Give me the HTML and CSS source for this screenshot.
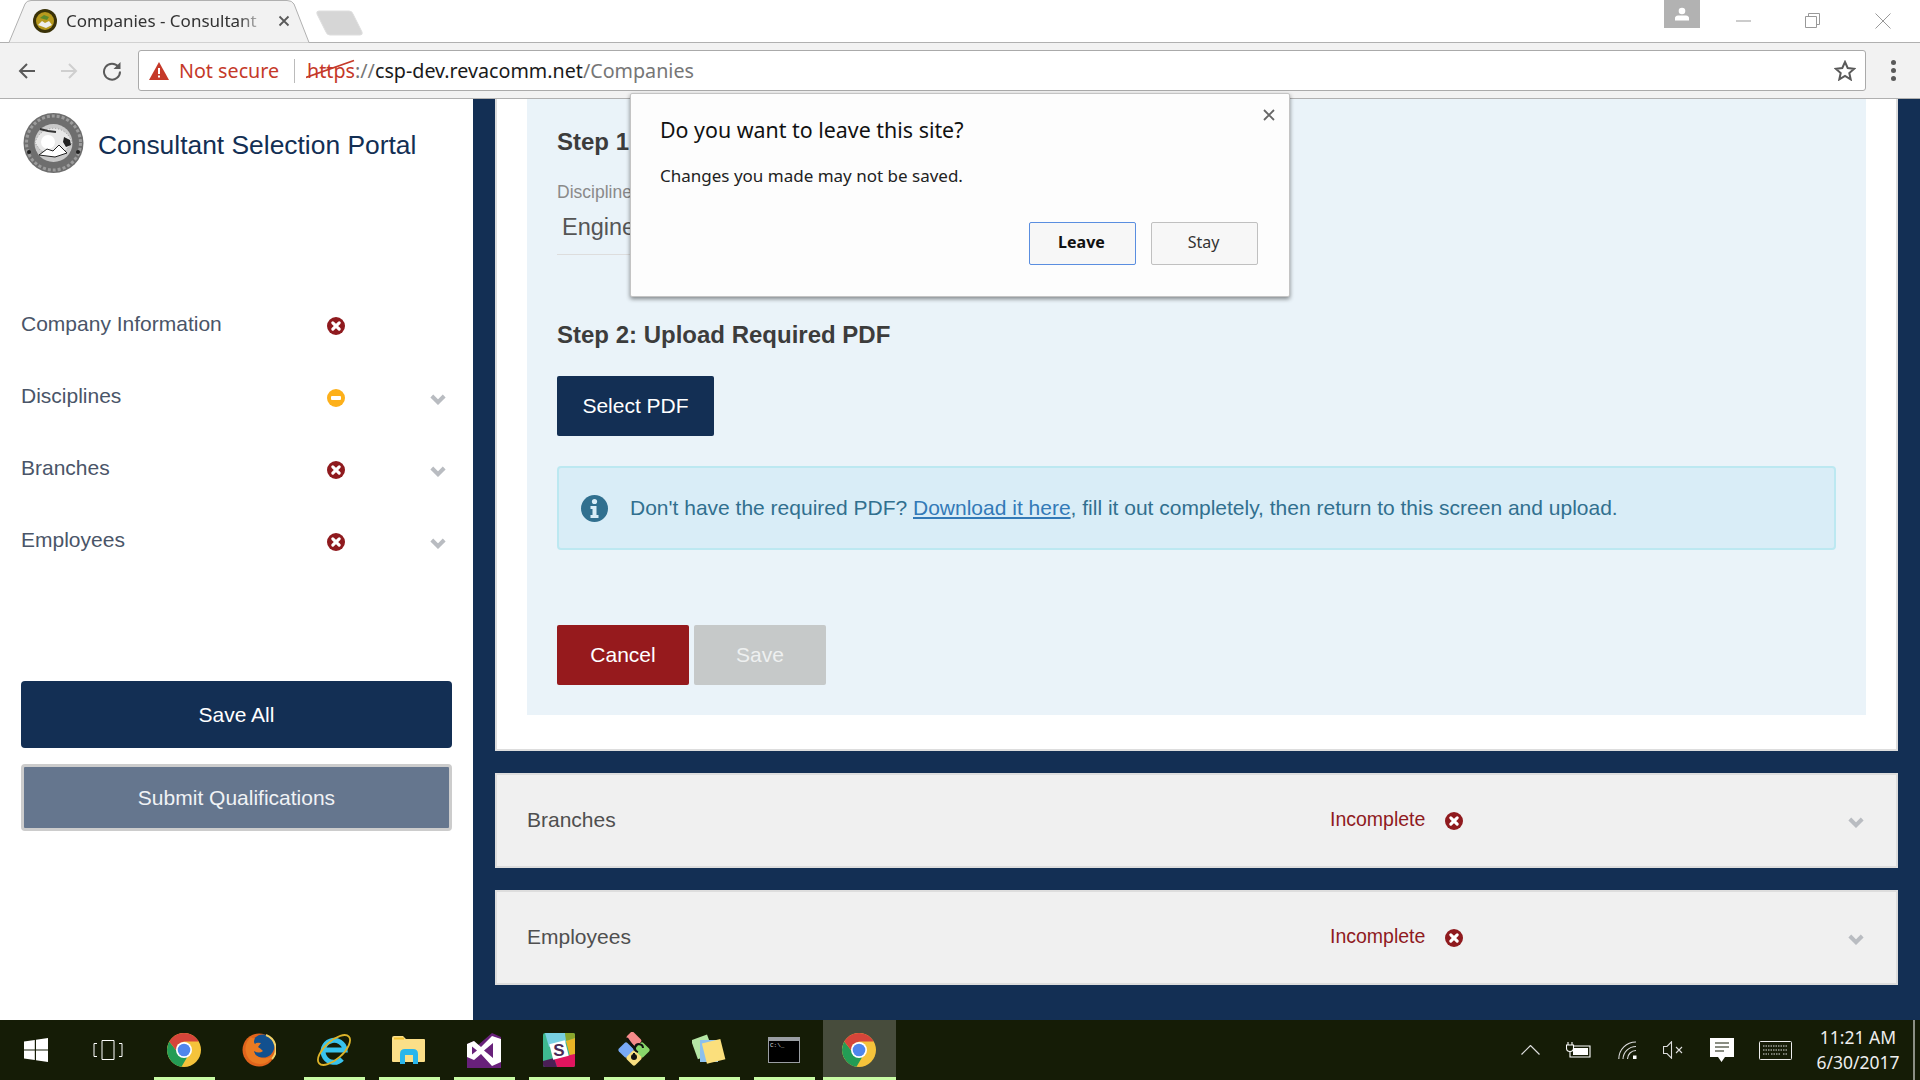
FILE: index.html
```html
<!doctype html>
<html>
  <head>
    <title>Companies - Consultant Selection Portal</title>
    <link rel="stylesheet" href="styles.css">
  </head>
  <body>
    <svg class="sprites">
      <symbol id="bad" viewBox="0 0 18 18">
        <circle cx="9" cy="9" r="9" fill="#8f1a1e"/>
        <path d="M5.8 5.8l6.4 6.4M12.2 5.8l-6.4 6.4" stroke="#fff" stroke-width="3.1" stroke-linecap="round"/>
      </symbol>
      <symbol id="partial" viewBox="0 0 18 18">
        <circle cx="9" cy="9" r="9" fill="#fdb01a"/>
        <rect x="4" y="7" width="10" height="4" rx="1" fill="#fff"/>
      </symbol>
      <symbol id="chevron" viewBox="0 0 16 11">
        <path d="M1.800 2l6.200 6.200L14.200 2" fill="none" stroke="#b9bcc1" stroke-width="4"/>
      </symbol>
      <symbol id="chrome" viewBox="0 0 34 34">
        <circle cx="17" cy="17" r="17" fill="#f5c33b"/>
        <path d="M2.3 8.5A17 17 0 0 0 14.5 33.8L22 21H12Z" fill="#249c55"/>
        <path d="M2.3 8.5A17 17 0 0 1 31.7 8.5H17L10 12 12 21Z" fill="#d5453a"/>
        <circle cx="17" cy="17" r="8" fill="#fff"/>
        <circle cx="17" cy="17" r="6.3" fill="#4f86ec"/>
      </symbol>
    </svg>

    <div class="tabstrip">
      <div class="tab">
        <svg class="tab-shape" width="311" height="43" viewBox="0 0 311 43">
          <path d="M0 42.5H1L17 4Q18.500 .5 23 .5H279Q284 .5 286 4L301 42.500H311V43H0Z" fill="#f2f2f2" stroke="#b0b0b0"/>
        </svg>
        <svg class="favicon" width="24" height="24" viewBox="0 0 24 24">
          <circle cx="12" cy="12" r="12" fill="#3a3208"/>
          <circle cx="12" cy="12" r="9" fill="#b89a1e"/>
          <path d="M5 16l4-4 3 2 4-2 3 4-6 3z" fill="#eee"/>
          <path d="M7 9l4-3 5 2-2 3z" fill="#5c8a2c"/>
        </svg>
        <span class="tab-title">Companies - Consultant</span>
        <svg class="tab-close" width="12" height="12" viewBox="0 0 12 12">
          <path d="M1.500 1.500l9 9M10.500 1.500l-9 9" stroke="#5a5a5a" stroke-width="1.800"/>
        </svg>
      </div>
      <svg class="newtab" width="50" height="26" viewBox="0 0 50 26">
        <path d="M3 1H33Q36 1 37 4L46 22Q47 25 44 25H14Q11 25 10 22L1 4Q0 1 3 1Z" fill="#d6d6d6" stroke="#dedede"/>
      </svg>
      <div class="window-controls">
        <div class="profile">
          <svg width="16" height="14" viewBox="0 0 16 14">
            <circle cx="8" cy="4" r="3.300" fill="#fff"/>
            <path d="M1 13.500V11Q1 9 4 8.500H12Q15 9 15 11V13.500Z" fill="#fff"/>
          </svg>
        </div>
        <svg class="win-min" width="15" height="2" viewBox="0 0 15 2"><path d="M0 1H15" stroke="#999"/></svg>
        <svg class="win-restore" width="15" height="15" viewBox="0 0 15 15">
          <path d="M3.500 3.500V.5H14.500V11.500H11.500M.5 3.500H11.500V14.500H.5Z" fill="none" stroke="#999"/>
        </svg>
        <svg class="win-close" width="16" height="16" viewBox="0 0 16 16">
          <path d="M.5 .5l15 15M15.500 .5l-15 15" stroke="#999"/>
        </svg>
      </div>
    </div>

    <div class="toolbar">
      <svg class="nav-icon" width="18" height="18" viewBox="0 0 18 18">
        <path d="M17 9H2M9 2L2 9l7 7" fill="none" stroke="#5a5a5a" stroke-width="2"/>
      </svg>
      <svg class="nav-icon nav-forward" width="18" height="18" viewBox="0 0 18 18">
        <path d="M1 9H16M9 2l7 7-7 7" fill="none" stroke="#cfcfcf" stroke-width="2"/>
      </svg>
      <svg class="nav-icon nav-reload" width="20" height="20" viewBox="0 0 20 20">
        <path d="M16.500 6A8 8 0 1 0 18 10.500" fill="none" stroke="#5a5a5a" stroke-width="2"/>
        <path d="M18.500 1V8H11.500Z" fill="#5a5a5a"/>
      </svg>
      <div class="omnibox">
        <svg class="warn" width="20" height="18" viewBox="0 0 20 18">
          <path d="M10 0L20 18H0Z" fill="#c53929"/>
          <path d="M9 6h2v6H9zM9 13.500h2v2H9z" fill="#fff"/>
        </svg>
        <span class="not-secure">Not secure</span>
        <span class="omni-sep"></span>
        <span class="url">
          <span class="url-scheme">https</span><span class="url-dim">://</span><span class="url-host">csp-dev.revacomm.net</span><span class="url-dim">/Companies</span>
          <svg class="url-strike" width="50" height="20" viewBox="0 0 50 20">
            <path d="M0 18.500L48 1.500" stroke="#c53929" stroke-width="1.800"/>
          </svg>
        </span>
        <svg class="star" width="22" height="21" viewBox="0 0 22 21">
          <path d="M11 2l2.700 6 6.500.7-4.900 4.300 1.400 6.400L11 16l-5.700 3.400 1.400-6.400L1.800 8.700 8.300 8z" fill="none" stroke="#5a5a5a" stroke-width="2"/>
        </svg>
      </div>
      <div class="kebab"><i></i><i></i><i></i></div>
    </div>

    <div class="page">
      <aside class="sidebar">
        <div class="brand">
          <svg class="seal" width="61" height="60" viewBox="0 0 61 60">
            <circle cx="30.500" cy="30" r="30" fill="#6e6e6e"/>
            <circle cx="30.500" cy="30" r="27" fill="none" stroke="#9c9c9c" stroke-width="3" stroke-dasharray="3 2"/>
            <circle cx="30.500" cy="30" r="19" fill="#c9c9c9"/>
            <path d="M12 30A19 19 0 0 1 49 30L42 38H18Z" fill="#e8e8e8" stroke="#999" stroke-dasharray="1 2"/>
            <circle cx="25" cy="29" r="7" fill="#fff"/>
            <path d="M16 42l8-6 6 2 6-6 8 8-12 4z" fill="#fff" stroke="#222"/>
            <path d="M41 24l6 3 1 5-5 2-3-5z" fill="#222"/>
            <path d="M17 16l8 2 8 1" stroke="#333" stroke-width="2" fill="none"/>
            <circle cx="6" cy="39" r="2" fill="#222"/>
            <circle cx="55" cy="39" r="2" fill="#222"/>
          </svg>
          <span class="brand-name">Consultant Selection Portal</span>
        </div>
        <nav class="section-nav">
          <div class="nav-row">
            <span class="nav-label">Company Information</span>
            <svg class="status" width="18" height="18"><use href="#bad"/></svg>
          </div>
          <div class="nav-row">
            <span class="nav-label">Disciplines</span>
            <svg class="status" width="18" height="18"><use href="#partial"/></svg>
            <svg class="chevron" width="16" height="11"><use href="#chevron"/></svg>
          </div>
          <div class="nav-row">
            <span class="nav-label">Branches</span>
            <svg class="status" width="18" height="18"><use href="#bad"/></svg>
            <svg class="chevron" width="16" height="11"><use href="#chevron"/></svg>
          </div>
          <div class="nav-row">
            <span class="nav-label">Employees</span>
            <svg class="status" width="18" height="18"><use href="#bad"/></svg>
            <svg class="chevron" width="16" height="11"><use href="#chevron"/></svg>
          </div>
        </nav>
        <button class="side-btn save-all">Save All</button>
        <button class="side-btn submit">Submit Qualifications</button>
      </aside>

      <main class="content">
        <section class="card">
          <div class="panel">
            <h3 class="step step-one">Step 1</h3>
            <div class="field">
              <div class="field-label">Discipline</div>
              <div class="field-value">Engineering</div>
            </div>
            <h3 class="step step-two">Step 2: Upload Required PDF</h3>
            <button class="btn btn-navy">Select PDF</button>
            <div class="alert">
              <svg class="alert-icon" width="27" height="27" viewBox="0 0 27 27">
                <circle cx="13.500" cy="13.500" r="13.500" fill="#31708f"/>
                <circle cx="13.500" cy="6.500" r="2.600" fill="#d9edf7"/>
                <path d="M9.500 11h6v9h2v3h-8v-3h2v-6h-2z" fill="#d9edf7"/>
              </svg>
              <span>Don't have the required PDF? <a href="#">Download it here</a>, fill it out completely, then return to this screen and upload.</span>
            </div>
            <div class="actions">
              <button class="btn btn-red">Cancel</button>
              <button class="btn btn-grey">Save</button>
            </div>
          </div>
        </section>
        <div class="section-row">
          <span class="row-title">Branches</span>
          <span class="row-state">Incomplete</span>
          <svg class="status" width="18" height="18"><use href="#bad"/></svg>
          <svg class="chevron" width="16" height="11"><use href="#chevron"/></svg>
        </div>
        <div class="section-row">
          <span class="row-title">Employees</span>
          <span class="row-state">Incomplete</span>
          <svg class="status" width="18" height="18"><use href="#bad"/></svg>
          <svg class="chevron" width="16" height="11"><use href="#chevron"/></svg>
        </div>
      </main>

      <div class="dialog">
        <svg class="dialog-close" width="12" height="12" viewBox="0 0 12 12">
          <path d="M1 1l10 10M11 1L1 11" stroke="#666" stroke-width="1.800"/>
        </svg>
        <div class="dialog-title">Do you want to leave this site?</div>
        <div class="dialog-text">Changes you made may not be saved.</div>
        <div class="dialog-buttons">
          <button class="dlg-btn dlg-leave">Leave</button>
          <button class="dlg-btn">Stay</button>
        </div>
      </div>
    </div>

    <div class="taskbar">
      <div class="start">
        <svg width="24" height="24" viewBox="0 0 24 24">
          <path d="M0 3.500L10.800 2V11.400H0ZM12 1.800L24 0V11.400H12ZM0 12.600H10.800V22L0 20.500ZM12 12.600H24V24L12 22.200Z" fill="#fff"/>
        </svg>
      </div>
      <div class="taskview">
        <svg width="30" height="20" viewBox="0 0 30 20">
          <path d="M9 .5H21V19.500H9ZM4 3.500H1V16.500H4M26 3.500H29V16.500H26" fill="none" stroke="#fff"/>
        </svg>
      </div>
      <div class="task running"><svg width="34" height="34"><use href="#chrome"/></svg></div>
      <div class="task">
        <svg width="34" height="34" viewBox="0 0 34 34">
          <circle cx="17" cy="17" r="16.500" fill="#e0641c"/>
          <circle cx="21" cy="13" r="11.500" fill="#12508f"/>
          <path d="M24 2A15 15 0 0 1 30 26" fill="none" stroke="#f3d36a" stroke-width="2"/>
          <path d="M9 4Q3 9 3.500 17Q5 30 18 31Q27 31 31 22Q27 26 20 25Q13 24 12 18Q17 21 21 18Q18 15 16 14L19 10Q14 9 13 11Q11 9 13 5Q10 6 9 4Z" fill="#ea7a22"/>
        </svg>
      </div>
      <div class="task running">
        <svg width="34" height="34" viewBox="0 0 34 34">
          <path d="M7 17H28A11 11 0 1 0 25 26" fill="none" stroke="#39c3ee" stroke-width="5"/>
          <ellipse cx="17" cy="17" rx="20" ry="9" transform="rotate(-42 17 17)" fill="none" stroke="#dcb32a" stroke-width="1.800"/>
        </svg>
      </div>
      <div class="task running">
        <svg width="33" height="28" viewBox="0 0 33 28">
          <path d="M0 2Q0 0 2 0H11L14 3H32Q33 3 33 4V25Q33 26 32 26H1Q0 26 0 25Z" fill="#fbdf88"/>
          <path d="M2 2.500H12" stroke="#f1c232" stroke-width="2"/>
          <path d="M8 28V18Q8 13 13 13H21Q26 13 26 18V28H21V19H13V28Z" fill="#29b6ec"/>
        </svg>
      </div>
      <div class="task running">
        <svg width="34" height="35" viewBox="0 0 34 35">
          <path d="M0 35H34V4L25 0 10 13 7 8 0 11Z" fill="#68217a"/>
          <path fill-rule="evenodd" d="M0 11L7 8 14 14 25 3 34 6V29L25 33 14 21 7 27 0 24ZM5 13.500V21.500L10 17.500ZM17 17.500L26 25V10Z" fill="#fff"/>
        </svg>
      </div>
      <div class="task running">
        <svg width="32" height="34" viewBox="0 0 32 34">
          <rect width="32" height="34" rx="2" fill="#3eb890"/>
          <path d="M2 0H22L24 9 6 14Z" fill="#78d0e2"/>
          <path d="M22 0H30Q32 0 32 2V5L23 8Z" fill="#8aa62c"/>
          <path d="M23 8L32 5V21L27 23Z" fill="#e8b425"/>
          <path d="M11 26L27 22 32 21V32Q32 34 30 34H14Z" fill="#e0155f"/>
          <path d="M0 28L11 25 14 34H2Q0 34 0 32Z" fill="#4a1f55"/>
          <rect x="8" y="9" width="16" height="16" fill="#fff" transform="rotate(-14 16 17)"/>
          <text x="16" y="23" class="slack-s">S</text>
        </svg>
      </div>
      <div class="task running">
        <svg width="36" height="36" viewBox="0 0 36 36">
          <rect x="11" y="2.500" width="14" height="9" rx="2" transform="rotate(45 18 7)" fill="#f58a8a"/>
          <rect x="20" y="12" width="12" height="12" rx="2" transform="rotate(45 26 18)" fill="#88d66a"/>
          <rect x="4" y="12" width="12" height="12" rx="2" transform="rotate(45 10 18)" fill="#78a9f5"/>
          <rect x="12" y="20" width="12" height="12" rx="2" transform="rotate(45 18 26)" fill="#f7de80"/>
          <path d="M11 6l9 13M18 21v6" stroke="#111" stroke-width="2"/>
          <path d="M27 16a4 4 0 1 0-5 4" fill="none" stroke="#111" stroke-width="2"/>
          <circle cx="18" cy="25" r="3" fill="#111"/>
        </svg>
      </div>
      <div class="task running">
        <svg width="34" height="32" viewBox="0 0 34 32">
          <rect x="2" y="3" width="17" height="20" transform="rotate(-20 10 13)" fill="#b5e6a5"/>
          <rect x="8" y="6" width="18" height="22" fill="#8cc0ee"/>
          <rect x="12" y="7" width="19" height="21" transform="rotate(-14 21 17)" fill="#fbdf7c"/>
        </svg>
      </div>
      <div class="task running">
        <svg width="32" height="26" viewBox="0 0 32 26">
          <rect width="32" height="26" fill="#9a9ea3"/>
          <rect x="1" y="4" width="30" height="21" fill="#000"/>
          <text x="2" y="10" class="cmd-text">C:\_</text>
        </svg>
      </div>
      <div class="task task-active running"><svg width="34" height="34"><use href="#chrome"/></svg></div>

      <div class="tray">
        <svg class="tray-chevron" width="19" height="10" viewBox="0 0 19 10">
          <path d="M.5 9.500L9.500 .5l9 9" fill="none" stroke="#ddd" stroke-width="1.200"/>
        </svg>
        <svg class="tray-power" width="25" height="16" viewBox="0 0 25 16">
          <path d="M2 0v3M6 0v3M.5 3h7v3a3.500 3.500 0 0 1-7 0zM4 9.500V15H24V4H8" fill="none" stroke="#fff" stroke-width="1.100"/>
          <rect x="7" y="6" width="15" height="7" fill="#fff"/>
        </svg>
        <svg class="tray-wifi" width="20" height="18" viewBox="0 0 20 18">
          <path d="M.8 18A17 17 0 0 1 18 1M5 18A13 13 0 0 1 18 5.500M9.500 18A8.500 8.500 0 0 1 18 9.500" fill="none" stroke="#ddd" stroke-width="1.100"/>
          <rect x="15" y="14.500" width="3.500" height="3.500" fill="#fff"/>
        </svg>
        <svg class="tray-sound" width="21" height="18" viewBox="0 0 21 18">
          <path d="M8.500 .8V17.200L4 12.500H.5V5.500H4ZM13 6l6 6M19 6l-6 6" fill="none" stroke="#ddd" stroke-width="1.100"/>
        </svg>
        <svg class="tray-note" width="24" height="24" viewBox="0 0 24 24">
          <path d="M0 0H24V19H15L11.500 24 8 19H0Z" fill="#fff"/>
          <path d="M5 5H19M5 9H19M5 13H14" stroke="#151c06" stroke-width="1.200"/>
        </svg>
        <svg class="tray-keys" width="33" height="19" viewBox="0 0 33 19">
          <rect x=".5" y=".5" width="32" height="18" rx="1" fill="none" stroke="#eee"/>
          <path d="M4 5H29M4 9H29M4 13H10M12 13H22M24 13H29" stroke="#ddd" stroke-dasharray="1.500 1"/>
        </svg>
        <div class="clock">
          <div>11:21 AM</div>
          <div>6/30/2017</div>
        </div>
        <div class="show-desktop"></div>
      </div>
    </div>
  </body>
</html>
```

FILE: styles.css
```css
html,
body {
  margin: 0;
  height: 100%;
  overflow: hidden;
}

body {
  display: flex;
  flex-direction: column;
  width: 1920px;
  height: 1080px;
  background: #fff;
  font-family: "Liberation Sans", Arial, sans-serif;
}

button {
  font-family: inherit;
  cursor: pointer;
}

.sprites {
  display: none;
}

/* browser chrome */
.tabstrip {
  display: flex;
  flex: none;
  height: 42px;
  border-bottom: 1px solid #b0b0b0;
  background: #fff;
  font-family: "Noto Sans", sans-serif;
}

.tab {
  position: relative;
  display: flex;
  align-items: center;
  flex: none;
  width: 311px;
  height: 43px;
  margin-left: 8px;
  padding-left: 25px;
  box-sizing: border-box;
}

.tab-shape {
  position: absolute;
  top: 0;
  left: 0;
}

.favicon {
  position: relative;
  flex: none;
  margin-bottom: 2px;
}

.tab-title {
  position: relative;
  flex: none;
  width: 191px;
  margin-left: 9px;
  margin-bottom: 2px;
  white-space: nowrap;
  font-size: 17px;
  color: #333;
  -webkit-mask-image: linear-gradient(to right, #000 90%, rgba(0, 0, 0, 0.35));
  mask-image: linear-gradient(to right, #000 90%, rgba(0, 0, 0, 0.35));
}

.tab-close {
  position: relative;
  flex: none;
  margin-left: 21px;
  margin-bottom: 2px;
}

.newtab {
  flex: none;
  margin: 10px 0 0 -3px;
}

.window-controls {
  display: flex;
  align-items: flex-start;
  margin-left: auto;
  padding-right: 29px;
}

.profile {
  display: flex;
  align-items: center;
  justify-content: center;
  width: 36px;
  height: 28px;
  background: #b2b2b2;
}

.win-min {
  margin: 20px 0 0 36px;
}

.win-restore {
  margin: 13px 0 0 54px;
}

.win-close {
  margin: 13px 0 0 55px;
}

.toolbar {
  display: flex;
  align-items: center;
  flex: none;
  height: 55px;
  border-bottom: 1px solid #b0b0b0;
  background: #f2f2f2;
  font-family: "Noto Sans", sans-serif;
}

.nav-icon {
  flex: none;
  margin-left: 18px;
}

.nav-forward {
  margin-left: 24px;
}

.nav-reload {
  margin-left: 24px;
}

.omnibox {
  display: flex;
  align-items: center;
  flex: none;
  width: 1728px;
  height: 41px;
  margin-left: 16px;
  padding: 0 9px 0 10px;
  box-sizing: border-box;
  border: 1px solid #aaa;
  border-radius: 3px;
  background: #fff;
  font-size: 19.700px;
}

.warn {
  flex: none;
}

.not-secure {
  margin-left: 10px;
  color: #c53929;
}

.omni-sep {
  width: 1px;
  height: 24px;
  margin: 0 12px 0 15px;
  background: #bbb;
}

.url {
  position: relative;
  flex: 1;
  white-space: nowrap;
}

.url-scheme {
  color: #c53929;
}

.url-dim {
  color: #767676;
}

.url-host {
  color: #1a1a1a;
}

.url-strike {
  position: absolute;
  top: 2px;
  left: -1px;
}

.kebab {
  display: flex;
  flex-direction: column;
  gap: 3px;
  margin-left: 25px;
}

.kebab i {
  width: 5px;
  height: 5px;
  border-radius: 50%;
  background: #5a5a5a;
}

/* page */
.page {
  position: relative;
  display: flex;
  flex: none;
  height: 921px;
}

.sidebar {
  flex: none;
  width: 473px;
  background: #fff;
}

.brand {
  display: flex;
  align-items: center;
  padding: 14px 0 0 23px;
}

.brand-name {
  margin: 4px 0 0 14px;
  font-size: 26.400px;
  color: #132f54;
}

.section-nav {
  margin-top: 116px;
}

.nav-row {
  display: flex;
  align-items: center;
  height: 72px;
  padding-left: 21px;
}

.nav-label {
  width: 306px;
  margin-top: -2px;
  font-size: 21px;
  color: #4a5568;
}

.nav-row .status {
  margin-top: 1px;
}

.chevron {
  margin: 5px 0 0 85px;
}

.side-btn {
  display: block;
  width: 431px;
  height: 67px;
  margin-left: 21px;
  border: 0;
  border-radius: 4px;
  font-size: 21px;
  color: #fff;
}

.save-all {
  margin-top: 104px;
  background: #132f54;
}

.submit {
  margin-top: 16px;
  border: 3px solid #ccc;
  background: #65768e;
  color: #f0f2f5;
}

.content {
  flex: 1;
  padding: 0 22px;
  background: #132f54;
}

.card {
  height: 652px;
  padding: 0 30px;
  box-sizing: border-box;
  border: 2px solid #ddd;
  border-top: 0;
  background: #fff;
}

.panel {
  height: 616px;
  padding: 29px 30px 0;
  box-sizing: border-box;
  background: #eaf3f9;
}

.step {
  margin: 0;
  font-size: 24px;
  line-height: 28px;
  color: #3c3c3c;
}

.field {
  width: 400px;
  margin-top: 26px;
}

.field-label {
  font-size: 17.500px;
  line-height: 20px;
  color: #8a8a8a;
}

.field-value {
  margin-top: 9px;
  padding: 0 0 11px 5px;
  border-bottom: 1px solid #ddd;
  font-size: 23.500px;
  line-height: 32px;
  color: #555;
}

.step-two {
  margin-top: 66px;
}

.btn {
  height: 60px;
  border: 0;
  border-radius: 2px;
  font-size: 21px;
  color: #fff;
}

.btn-navy {
  display: block;
  width: 157px;
  margin-top: 27px;
  background: #132f54;
}

.alert {
  display: flex;
  align-items: center;
  height: 84px;
  margin-top: 30px;
  padding-left: 22px;
  box-sizing: border-box;
  border: 2px solid #bce8f1;
  border-radius: 4px;
  background: #d9edf7;
  font-size: 21px;
  color: #31708f;
}

.alert-icon {
  flex: none;
  margin-right: 22px;
}

.alert a {
  color: #337ab7;
}

.actions {
  display: flex;
  gap: 5px;
  margin-top: 75px;
}

.btn-red {
  width: 132px;
  background: #961a1d;
}

.btn-grey {
  width: 132px;
  background: #c6c9c9;
  color: #eef0f0;
}

.section-row {
  display: flex;
  align-items: center;
  height: 95px;
  margin-top: 22px;
  padding-left: 30px;
  box-sizing: border-box;
  border: 2px solid #ddd;
  background: #f0f0f0;
  font-size: 21px;
}

.row-title {
  width: 803px;
  margin-top: -2px;
  color: #4f4f4f;
}

.row-state {
  width: 115px;
  margin-top: -2px;
  font-size: 19.500px;
  color: #8f1a1e;
}

.section-row .chevron {
  margin: 3px 0 0 385px;
}

/* leave site dialog */
.dialog {
  position: absolute;
  top: -6px;
  left: 630px;
  width: 660px;
  height: 204px;
  padding: 0 31px 0 29px;
  box-sizing: border-box;
  border: 1px solid #c4c4c4;
  border-radius: 2px;
  background: #fdfdfd;
  box-shadow: 0 2px 4px rgba(0, 0, 0, 0.45);
  font-family: "Noto Sans", sans-serif;
}

.dialog-close {
  position: absolute;
  top: 15px;
  right: 14px;
}

.dialog-title {
  margin-top: 21px;
  font-size: 21.400px;
  line-height: 30px;
  color: #111;
}

.dialog-text {
  margin-top: 19px;
  font-size: 17px;
  line-height: 24px;
  color: #222;
}

.dialog-buttons {
  display: flex;
  justify-content: flex-end;
  gap: 15px;
  margin-top: 34px;
}

.dlg-btn {
  width: 107px;
  height: 43px;
  padding: 0 2px 3px 0;
  border: 1px solid #c0c0c0;
  border-radius: 2px;
  background: #f7f7f7;
  font-family: inherit;
  font-size: 16px;
  color: #333;
}

.dlg-leave {
  border-color: #5a8ee0;
  font-weight: bold;
  color: #111;
}

/* windows taskbar */
.taskbar {
  display: flex;
  align-items: center;
  flex: none;
  height: 60px;
  background: #151c06;
  font-family: "Noto Sans", sans-serif;
}

.start {
  display: flex;
  justify-content: center;
  width: 72px;
}

.taskview {
  display: flex;
  justify-content: center;
  width: 75px;
  padding-right: 3px;
  box-sizing: border-box;
}

.task {
  display: flex;
  align-items: center;
  justify-content: center;
  box-sizing: border-box;
  width: 61px;
  height: 60px;
  margin: 0 7px;
  padding-right: 2px;
}

.running {
  box-shadow: inset 0 -3px 0 #c8fba4;
}

.task-active {
  width: 73px;
  margin: 0 0 0 1px;
  background: #474c3c;
}

.slack-s {
  font-family: "Liberation Sans", sans-serif;
  font-size: 17px;
  font-weight: bold;
  text-anchor: middle;
  fill: #4a2a55;
}

.cmd-text {
  font-family: "Liberation Mono", monospace;
  font-size: 6px;
  fill: #ddd;
}

.tray {
  display: flex;
  align-items: center;
  flex: 1;
  height: 60px;
  padding-left: 625px;
}

.tray-power {
  margin-left: 26px;
}

.tray-wifi {
  margin-left: 27px;
}

.tray-sound {
  margin-left: 25px;
}

.tray-note {
  margin-left: 26px;
}

.tray-keys {
  margin-left: 25px;
}

.clock {
  flex: none;
  width: 108px;
  margin-left: 12px;
  text-align: center;
  font-size: 17.500px;
  line-height: 25px;
  color: #eee;
}

.show-desktop {
  flex: none;
  width: 2px;
  height: 60px;
  margin-left: 1px;
  background: #8c8f84;
}
```
